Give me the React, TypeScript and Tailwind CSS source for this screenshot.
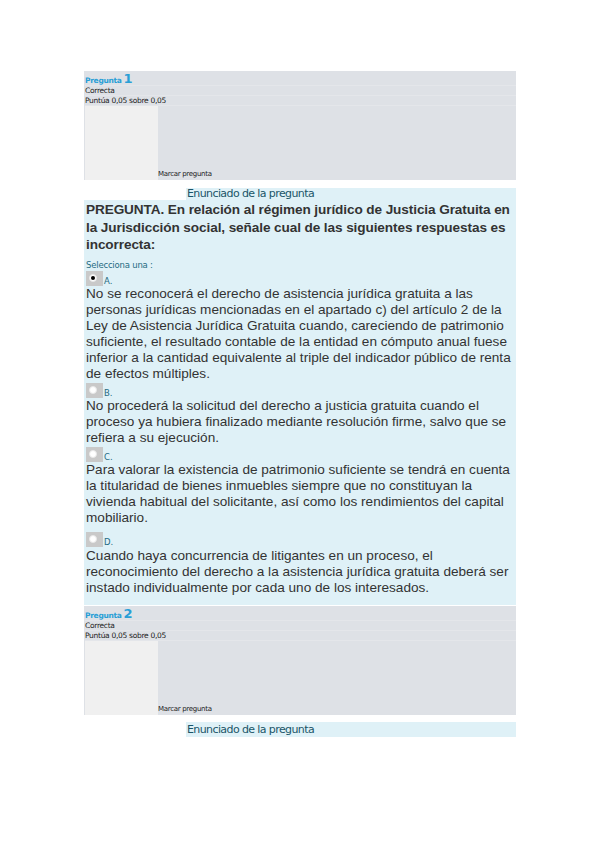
import React from "react";

const small = { fontFamily: '"DejaVu Sans", Verdana, sans-serif' };
const arial = { fontFamily: '"Liberation Sans", Arial, sans-serif' };

function Header({ n }: { n: number }) {
  return (
    <div className="h-[109px] bg-[#dee1e6] flex flex-col pl-[1px]" style={small}>
      <div className="h-[15px] flex items-end leading-none text-[#2a9fd6] border-b border-[#e4e6ea]">
        <span className="text-[7.5px] font-bold tracking-[-0.3px] mb-[1px]">Pregunta</span>
        <span className="text-[13px] font-bold ml-[2px] leading-[13px]">{n}</span>
      </div>
      <div className="h-[10px] text-[7.5px] leading-[10px] text-[#222] tracking-[-0.3px] border-b border-[#e4e6ea]">Correcta</div>
      <div className="h-[10px] text-[7.5px] leading-[10px] text-[#222] tracking-[-0.3px] border-b border-[#e4e6ea]">Puntúa 0,05 sobre 0,05</div>
      <div className="flex flex-1 items-end">
        <div className="w-[73px] h-full bg-[#f0f0f0]" />
        <span className="text-[7px] leading-[9px] text-[#222] tracking-[-0.3px] mb-[1px]">Marcar pregunta</span>
      </div>
    </div>
  );
}

function Radio({ letter, checked }: { letter: string; checked?: boolean }) {
  return (
    <div className="flex items-end h-[16px]">
      <div className="w-[17px] h-[15px] bg-[#c9c9c9] relative">
        <div className="absolute left-[3px] top-[3px] w-[8px] h-[8px] rounded-full bg-white border border-[#e8e8e8] flex items-center justify-center">
          {checked && <div className="w-[4px] h-[4px] rounded-full bg-black" />}
        </div>
      </div>
      <span className="text-[8.5px] leading-[9px] text-[#1f6b82] ml-[1px]" style={small}>{letter}.</span>
    </div>
  );
}

function Answer({ children }: { children: React.ReactNode }) {
  return <div className="text-[13.6px] leading-[16px] text-[#333] pl-[2px]" style={arial}>{children}</div>;
}

export default function App() {
  return (
    <div className="w-[599px] h-[848px] bg-white pt-[71px] pl-[84px]">
      <div className="w-[432px]">
        <Header n={1} />
        <div className="h-[8px]" />
        <div className="ml-[102px] h-[12px] bg-[#dff1f7] text-[11px] leading-[12px] text-[#1a5568] tracking-[-0.6px] pl-[1px]" style={small}>
          Enunciado de la pregunta
        </div>
        <div className="bg-[#dff1f7] h-[405px] flex flex-col">
          <div className="text-[13.6px] leading-[17.5px] font-bold text-[#333] pl-[2px] pt-[1px] tracking-[-0.1px]" style={arial}>
            PREGUNTA. En relación al régimen jurídico de Justicia Gratuita en la Jurisdicción social, señale cual de las siguientes respuestas es incorrecta:
          </div>
          <div className="h-[6px]" />
          <div className="text-[8.5px] leading-[10px] text-[#1f6b82] pl-[2px] tracking-[-0.2px]" style={small}>Selecciona una :</div>
          <div className="pl-[2px]"><Radio letter="A" checked /></div>
          <Answer>
            No se reconocerá el derecho de asistencia jurídica gratuita a las personas jurídicas mencionadas en el apartado c) del artículo 2 de la Ley de Asistencia Jurídica Gratuita cuando, careciendo de patrimonio suficiente, el resultado contable de la entidad en cómputo anual fuese inferior a la cantidad equivalente al triple del indicador público de renta de efectos múltiples.
          </Answer>
          <div className="pl-[2px]"><Radio letter="B" /></div>
          <Answer>
            No procederá la solicitud del derecho a justicia gratuita cuando el proceso ya hubiera finalizado mediante resolución firme, salvo que se refiera a su ejecución.
          </Answer>
          <div className="pl-[2px]"><Radio letter="C" /></div>
          <Answer>
            Para valorar la existencia de patrimonio suficiente se tendrá en cuenta la titularidad de bienes inmuebles siempre que no constituyan la vivienda habitual del solicitante, así como los rendimientos del capital mobiliario.
          </Answer>
          <div className="h-[5px]" />
          <div className="pl-[2px]"><Radio letter="D" /></div>
          <div className="h-[1px]" />
          <Answer>
            Cuando haya concurrencia de litigantes en un proceso, el reconocimiento del derecho a la asistencia jurídica gratuita deberá ser instado individualmente por cada uno de los interesados.
          </Answer>
        </div>
        <div className="h-[1px]" />
        <Header n={2} />
        <div className="h-[7px]" />
        <div className="ml-[102px] h-[15px] bg-[#dff1f7] text-[11px] leading-[15px] text-[#1a5568] tracking-[-0.6px] pl-[1px]" style={small}>
          Enunciado de la pregunta
        </div>
      </div>
    </div>
  );
}
